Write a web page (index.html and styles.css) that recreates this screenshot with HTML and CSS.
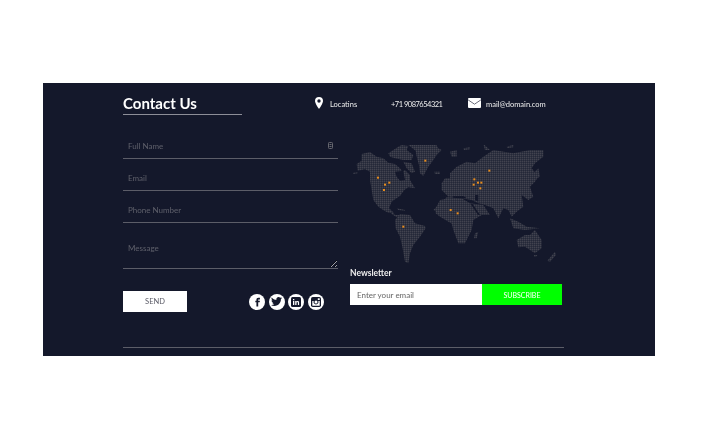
FILE: index.html
```html
<!DOCTYPE html>
<html lang="en">
<head>
  <meta charset="UTF-8" />
  <meta name="viewport" content="width=device-width, initial-scale=1" />
  <title>Contact Us</title>
  <link rel="stylesheet" href="styles.css">
</head>
<body>

<div class="panel">
  <div class="top">
    <h2>Contact Us</h2>
    <div class="info">
      <span class="info-item loc">
        <svg class="pin" width="8" height="12" viewBox="0 0 8 12"><path fill="#fff" fill-rule="evenodd" d="M4 0a4 4 0 0 0-4 4c0 2.600 4 8 4 8s4-5.400 4-8a4 4 0 0 0-4-4zm0 2.300a1.700 1.700 0 1 1 0 3.400 1.700 1.700 0 0 1 0-3.400z"/></svg>
        Locatins
      </span>
      <span class="info-item phone">+71 9087654321</span>
      <span class="info-item">
        <svg class="pin" width="13" height="10" viewBox="0 0 13 10"><rect width="13" height="10" rx="1" fill="#fff"/><path d="M0 1.800l6.500 4.400 6.500-4.400" fill="none" stroke="#6c6e7c" stroke-width="1"/></svg>
        mail@domain.com
      </span>
    </div>
  </div>

  <div class="main">
    <form class="form">
      <div class="field">
        <input type="text" placeholder="Full Name" />
        <svg class="field-icon" width="5" height="7" viewBox="0 0 5 7"><rect x=".5" y=".5" width="4" height="6" rx=".8" fill="none" stroke="#66676f"/><path d="M1.500 2.500h2M1.500 4.500h2" stroke="#66676f"/></svg>
      </div>
      <div class="field"><input type="text" placeholder="Email" /></div>
      <div class="field"><input type="text" placeholder="Phone Number" /></div>
      <div class="field"><textarea placeholder="Message"></textarea></div>

      <div class="actions">
        <button type="button" class="send"><span>SEND</span></button>
        <div class="social">
          <a href="#"><svg width="13" height="13" viewBox="0 0 24 24"><path fill="#14182b" d="M14.200 8.200h2.300V5h-2.800c-2.400 0-3.700 1.500-3.700 3.700V10.500H8v3h2V21h3.300v-7.500h2.700l.5-3h-3.200V9c0-.5.400-.8.900-.8z"/></svg></a>
          <a href="#"><svg width="11" height="11" viewBox="0 0 24 24"><path fill="#14182b" d="M23.950 4.570a10 10 0 0 1-2.820.77 4.960 4.960 0 0 0 2.160-2.720c-.95.55-2 .95-3.120 1.180a4.920 4.920 0 0 0-8.380 4.480C7.690 8.100 4.070 6.130 1.640 3.160a4.820 4.820 0 0 0-.67 2.480c0 1.710.87 3.210 2.190 4.100a4.900 4.900 0 0 1-2.230-.62v.06a4.920 4.920 0 0 0 3.950 4.830 5 5 0 0 1-2.210.08 4.940 4.940 0 0 0 4.600 3.420A9.870 9.870 0 0 1 0 19.540a14 14 0 0 0 7.560 2.210c9.050 0 14-7.500 14-13.980 0-.21 0-.42-.02-.63a9.940 9.940 0 0 0 2.460-2.550z"/></svg></a>
          <a href="#"><svg width="10" height="10" viewBox="0 0 10 10"><rect width="10" height="10" rx="1.500" fill="#14182b"/><path fill="#fff" d="M2 4h1.300v4H2zM2 2h1.300v1.300H2zM4.200 4h1.200v.6c.3-.4.7-.7 1.300-.7 1 0 1.400.7 1.400 1.700V8H6.900V5.900c0-.5-.2-.9-.6-.9-.5 0-.8.400-.8.900V8H4.200z"/></svg></a>
          <a href="#"><svg width="10" height="10" viewBox="0 0 10 10"><rect width="10" height="10" rx="1.800" fill="#14182b"/><path fill="#fff" d="M1.300 4h1.400a2.500 2.500 0 1 0 4.600 0h1.400v4.200a.5.5 0 0 1-.5.5H1.800a.5.5 0 0 1-.5-.5z"/><circle cx="5" cy="5" r="1.500" fill="#fff"/><rect x="6.800" y="1.300" width="1.900" height="1.700" fill="#fff"/></svg></a>
        </div>
      </div>
    </form>

    <div class="side">
      <svg class="map" width="210" height="122" viewBox="0 0 210 122">
        <defs>
          <pattern id="dots" width="2" height="2" patternUnits="userSpaceOnUse">
            <rect width="1.600" height="1.600" fill="#42434f"/>
          </pattern>
          <mask id="land" maskUnits="userSpaceOnUse" x="0" y="0" width="210" height="122">
            <g fill="#fff" transform="translate(-5 -5) scale(.3333)">
              <polygon points="35,72 50,62 50,42 75,36 95,50 115,55 130,68 150,72 165,85 172,95 180,90 195,105 195,120 210,145 190,142 178,150 165,168 150,178 140,185 132,205 148,220 130,218 118,212 100,200 85,180 80,150 75,120 75,95 60,88 38,92"/>
              <polygon points="24,98 38,96 38,100 24,102"/>
              <polygon points="130,40 145,30 160,20 170,15 190,18 185,30 205,45 200,60 175,60 150,55 135,50"/>
              <polygon points="175,65 200,70 210,95 200,100 185,85"/>
              <polygon points="190,15 210,8 235,8 255,15 270,8 280,25 290,30 275,45 265,60 250,80 235,108 225,100 222,75 215,50 212,32"/>
              <polygon points="268,95 285,95 285,102 270,102"/>
              <polygon points="150,240 165,222 195,225 210,250 240,258 242,265 225,290 205,315 195,340 190,370 180,365 172,320 165,290 152,265"/>
              <polygon points="132,205 150,225 165,225 155,232 140,222"/>
              <polygon points="155,205 180,210 180,213 160,210"/>
              <polygon points="290,130 300,115 336,115 336,165 310,170 290,150"/>
              <polygon points="272,205 285,180 336,172 336,260 285,230 272,220"/>
              <polygon fill="#000" points="150,95 175,92 180,120 165,122 155,110"/>
            </g>
            <g fill="#fff" transform="translate(100 -5) scale(.3333)">
              <polygon points="0,100 20,80 50,65 75,70 100,50 130,30 190,40 240,30 280,30 280,50 255,70 245,85 265,110 255,125 240,140 250,170 235,180 215,165 220,200 200,215 185,230 175,210 160,205 145,235 130,205 105,195 85,190 65,180 35,175 0,170"/>
              <polygon points="-10,172 30,172 60,190 95,225 70,240 65,270 45,310 25,310 10,270 0,230 -50,210"/>
              <polygon points="60,190 100,195 120,225 90,225"/>
              <polygon points="75,280 85,275 80,295 72,295"/>
              <polygon points="180,235 205,245 230,260 270,265 225,270 190,265"/>
              <polygon points="200,300 225,285 240,285 255,270 275,300 275,325 255,340 225,320 205,322"/>
              <polygon points="252,345 262,345 258,350 253,350"/>
              <polygon points="292,362 315,335 318,345 300,365"/>
              <polygon points="250,100 265,85 270,110 250,120"/>
              <polygon points="100,12 120,30 105,30"/>
              <polygon points="170,20 190,15 190,22 172,24"/>
              <polygon points="0,35 20,30 20,50 5,50"/>
              <polygon points="40,25 60,22 60,28 42,30"/>
              <polygon fill="#000" points="8,168 40,168 50,174 30,175 8,173"/>
              <polygon fill="#000" points="75,165 85,165 85,185 75,180"/>
              <polygon fill="#000" points="62,192 68,192 90,225 84,225"/>
            </g>
          </mask>
        </defs>
        <rect width="210" height="122" fill="url(#dots)" mask="url(#land)"/>
        <g fill="#e88c1c">
          <g transform="translate(-5 -5) scale(.3333)">
            <rect x="96" y="110" width="6" height="6"/>
            <rect x="117" y="131" width="6" height="6"/>
            <rect x="130" y="125" width="6" height="6"/>
            <rect x="114" y="147" width="6" height="6"/>
            <rect x="238" y="59" width="6" height="6"/>
            <rect x="314" y="207" width="6" height="6"/>
            <rect x="172" y="257" width="6" height="6"/>
          </g>
          <g transform="translate(100 -5) scale(.3333)">
            <rect x="115" y="89" width="6" height="6"/>
            <rect x="70" y="115" width="6" height="6"/>
            <rect x="81" y="125" width="6" height="6"/>
            <rect x="91" y="125" width="6" height="6"/>
            <rect x="68" y="131" width="6" height="6"/>
            <rect x="88" y="142" width="6" height="6"/>
            <rect x="20" y="217" width="6" height="6"/>
          </g>
        </g>
      </svg>

      <h4>Newsletter</h4>
      <div class="subscribe">
        <input type="text" placeholder="Enter your email" />
        <button type="button"><span>SUBSCRIBE</span></button>
      </div>
    </div>
  </div>

  <div class="rule"></div>
</div>

</body>
</html>
```

FILE: styles.css
```css
body {
  margin: 0;
  background-color: #fff;
  font-family: Lato, "Open Sans", sans-serif;
}
.panel {
  box-sizing: border-box;
  width: 612px;
  height: 273px;
  margin: 83px 0 0 43px;
  padding: 11px 91px 0 80px;
  background: #14182b;
  color: #fff;
}
/* own layer, so small text is drawn without colour fringes */
.top h2,
.info,
.field,
.send span,
.side h4,
.subscribe input,
.subscribe span {
  will-change: transform;
}
.top {
  display: flex;
  align-items: flex-start;
}
.top h2 {
  width: 119px;
  height: 20px;
  margin: 0;
  border-bottom: 1px solid #8d8e98;
  font-size: 15px;
  line-height: 18px;
  font-weight: 700;
}
.info {
  display: flex;
  align-items: center;
  height: 20px;
  margin-left: 73px;
  font-size: 7.500px;
  color: #eee;
}
.info-item {
  display: flex;
  align-items: center;
  gap: 5px;
}
.pin {
  margin-top: -2px;
}
.loc {
  gap: 7px;
  width: 76px;
}
.phone {
  width: 77px;
  letter-spacing: -.5px;
}
.main {
  display: grid;
  grid-template-columns: 215px 214px;
  column-gap: 12px;
  margin-top: 12px;
}
.field {
  position: relative;
  border-bottom: 1px solid #5c5d68;
}
.field input,
.field textarea {
  display: block;
  box-sizing: border-box;
  width: 100%;
  height: 31px;
  padding: 6px 5px 0;
  border: none;
  outline: none;
  background: transparent;
  color: #ddd;
  font-family: inherit;
  font-size: 8px;
}
.field textarea {
  height: 45px;
  padding-top: 20px;
}
.field input::placeholder,
.field textarea::placeholder {
  color: #5f606b;
}
.field-icon {
  position: absolute;
  top: 15px;
  right: 5px;
}
.actions {
  display: flex;
  align-items: center;
  margin-top: 22px;
}
.send {
  width: 64px;
  height: 21px;
  border: none;
  background: #fff;
  color: #5a5a66;
  font-family: inherit;
  font-size: 7.500px;
  cursor: pointer;
}
.send span,
.subscribe span {
  display: block;
}
.social {
  display: flex;
  gap: 3.500px;
  margin-left: 62px;
}
.social a {
  display: flex;
  align-items: center;
  justify-content: center;
  width: 16px;
  height: 16px;
  border-radius: 50%;
  background: #fff;
}
.map {
  display: block;
  margin-top: 18px;
}
.side h4 {
  margin: 1px 0 0;
  font-size: 8.500px;
  line-height: 11px;
  font-weight: 700;
  color: #eee;
}
.subscribe {
  display: flex;
  margin-top: 5px;
  width: 212px;
  height: 21px;
}
.subscribe input {
  box-sizing: border-box;
  width: 132px;
  padding: 0 7px;
  border: none;
  outline: none;
  background: #fff;
  font-family: inherit;
  font-size: 8px;
}
.subscribe input::placeholder {
  color: #666;
}
.subscribe button {
  width: 80px;
  border: none;
  background: #00ff00;
  color: #fff;
  font-family: inherit;
  font-size: 7px;
  cursor: pointer;
}
.rule {
  height: 1px;
  margin-top: 35px;
  background: #5c5d68;
}
```
